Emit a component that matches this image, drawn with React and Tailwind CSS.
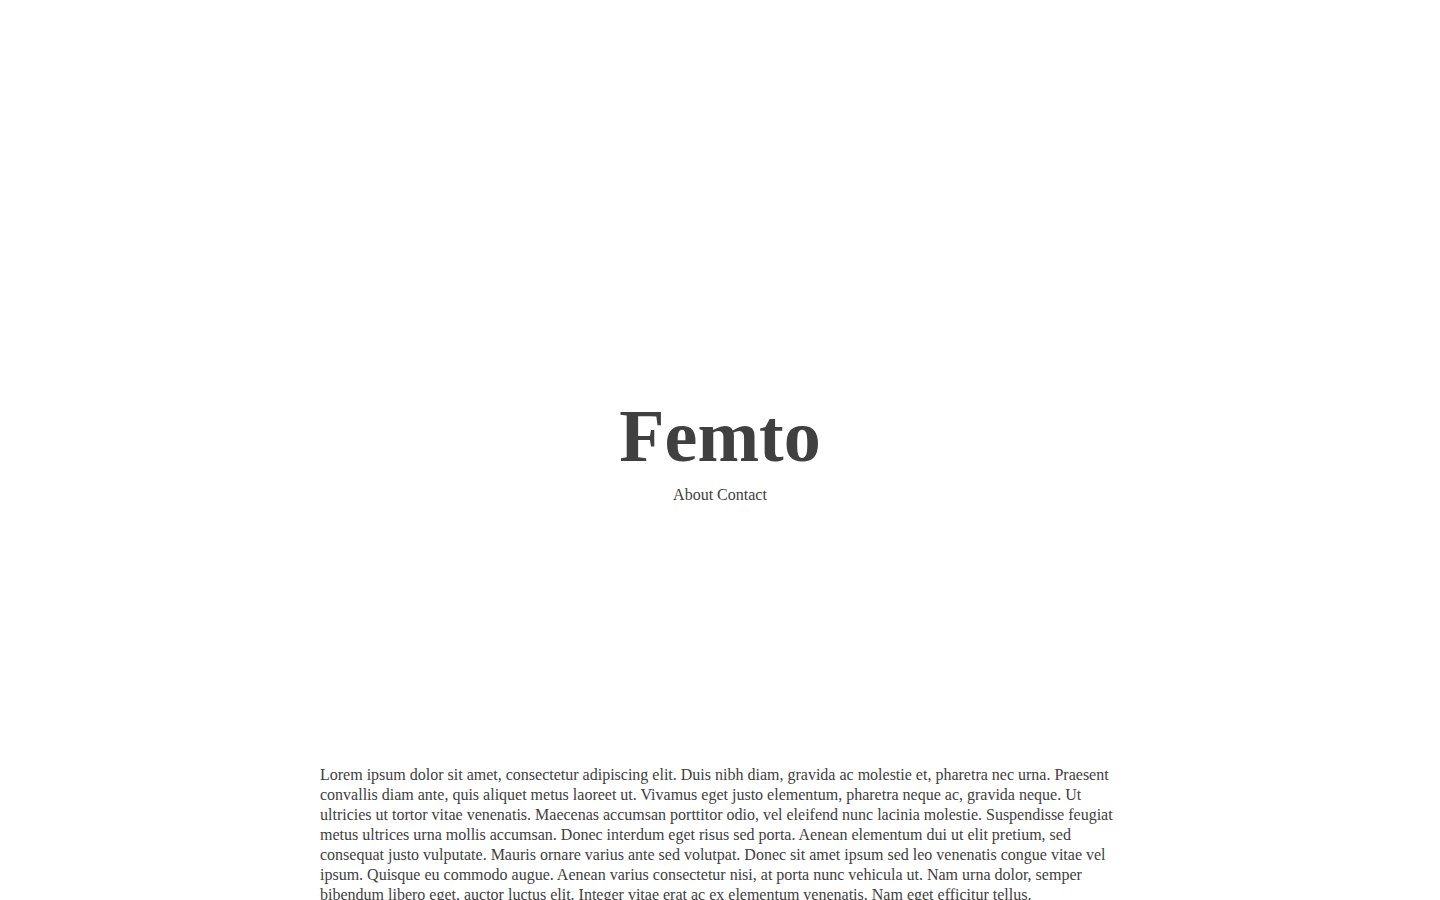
const body =
  'Lorem ipsum dolor sit amet, consectetur adipiscing elit. Duis nibh diam, gravida ac molestie et, pharetra nec urna. Praesent convallis diam ante, quis aliquet metus laoreet ut. Vivamus eget justo elementum, pharetra neque ac, gravida neque. Ut ultricies ut tortor vitae venenatis. Maecenas accumsan porttitor odio, vel eleifend nunc lacinia molestie. Suspendisse feugiat metus ultrices urna mollis accumsan. Donec interdum eget risus sed porta. Aenean elementum dui ut elit pretium, sed consequat justo vulputate. Mauris ornare varius ante sed volutpat. Donec sit amet ipsum sed leo venenatis congue vitae vel ipsum. Quisque eu commodo augue. Aenean varius consectetur nisi, at porta nunc vehicula ut. Nam urna dolor, semper bibendum libero eget, auctor luctus elit. Integer vitae erat ac ex elementum venenatis. Nam eget efficitur tellus.'

export default function App() {
  return (
    <div className="min-h-screen bg-white text-[#404040] font-['Liberation_Serif','Times_New_Roman',serif] text-base leading-5">
      <header className="flex flex-col items-center pt-[399px]">
        <h1 className="text-[74px] leading-none font-bold">Femto</h1>
        <nav className="mt-[12px] flex gap-1">
          <a href="#about">About</a>
          <a href="#contact">Contact</a>
        </nav>
      </header>

      <main className="mt-[260px] mx-auto w-[800px]">
        <p>{body}</p>
      </main>
    </div>
  )
}
